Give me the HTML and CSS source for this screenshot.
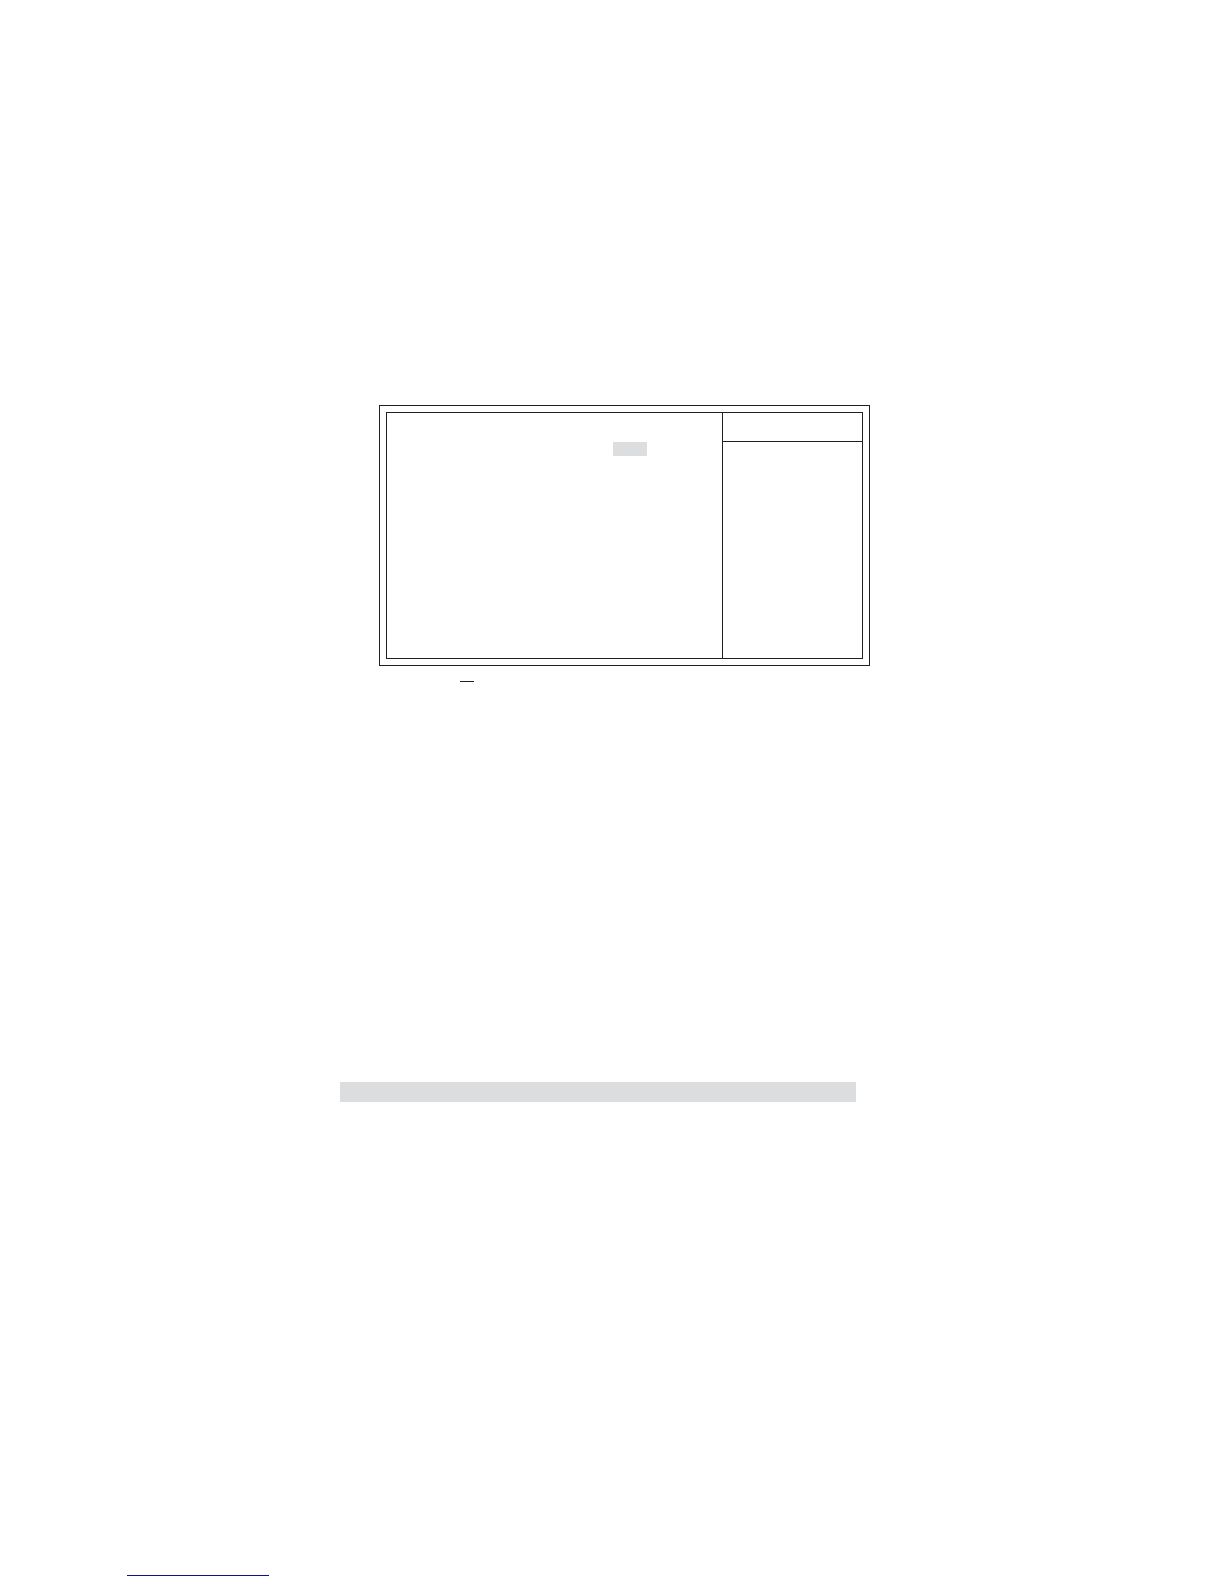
FILE: index.html
```html
<!DOCTYPE html>
<html lang="en">
<head>
    <meta charset="UTF-8">
    <meta name="viewport" content="width=device-width, initial-scale=1.0">
    <link rel="stylesheet" href="styles.css">
</head>
<body>

<main class="page">
    <section class="screen">
        <div class="panel">
            <div class="settings">
                <div class="selected"></div>
            </div>
            <aside class="help">
                <div class="help-header"></div>
            </aside>
        </div>
    </section>
    <hr class="key-line">
    <div class="band"></div>
</main>

<footer class="footer">
    <hr class="footer-line">
</footer>

</body>
</html>
```

FILE: styles.css
```css
body {
    margin: 0;
    background-color: #fff;
    font-family: "Liberation Sans", Arial, sans-serif;
}
hr {
    height: 1px;
    margin: 0;
    border: none;
}
.page {
    padding: 405px 354px 0 340px;
}

/* Setup screen with a double frame */
.screen {
    margin-left: 39px;
    padding: 6px;
    border: 1px solid #231f20;
}
.panel {
    display: grid;
    grid-template-columns: 1fr 140px;
    min-height: 245px;
    border: 1px solid #231f20;
}
.settings {
    display: flex;
    justify-content: flex-end;
    padding: 29px 75px 0 0;
}
.selected {
    width: 34px;
    height: 14px;
    background-color: #dcddde;
}
.help {
    border-left: 1px solid #231f20;
}
.help-header {
    height: 28px;
    border-bottom: 1px solid #231f20;
}

.key-line {
    width: 14px;
    margin: 15px 0 0 120px;
    background-color: #231f20;
}
.band {
    height: 20px;
    margin: 400px 14px 0 0;
    background-color: #dcddde;
}

.footer {
    padding: 473px 0 8px 127px;
}
.footer-line {
    width: 142px;
    background-color: #10108c;
}
```
